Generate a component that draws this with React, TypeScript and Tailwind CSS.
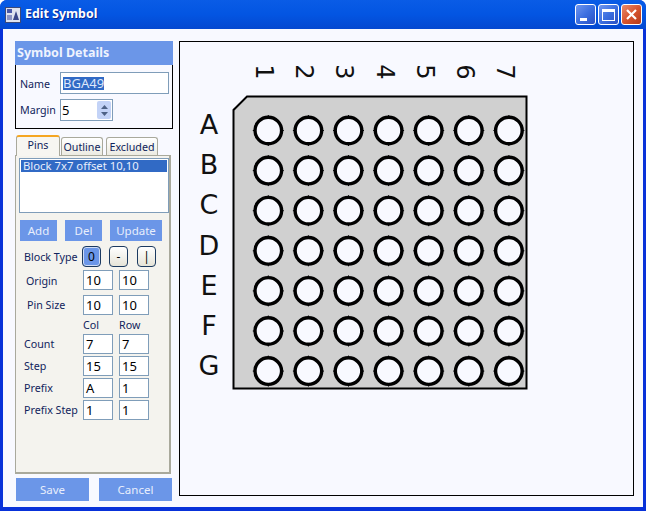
const uiFont = { fontFamily: '"Noto Sans", "Open Sans", sans-serif' };

const rows = ["A", "B", "C", "D", "E", "F", "G"];
const cols = ["1", "2", "3", "4", "5", "6", "7"];

function Field({ value, className = "" }: { value: string; className?: string }) {
  return (
    <div className={`flex h-[20px] w-[30px] items-center border border-[#7f9db9] bg-white pl-[2px] text-[13px] leading-none text-black ${className}`}>
      {value}
    </div>
  );
}

function FieldRow({ label, a, b, indent = "pl-[5px]", className = "" }: { label: string; a: string; b: string; indent?: string; className?: string }) {
  return (
    <div className={`flex h-[20px] items-center ${className}`}>
      <span className={`w-[64px] shrink-0 whitespace-nowrap text-[10.7px] text-[#10245c] ${indent}`}>{label}</span>
      <Field value={a} />
      <Field value={b} className="ml-[6px]" />
    </div>
  );
}

function BlueButton({ label, className }: { label: string; className: string }) {
  return (
    <div className={`flex items-center justify-center bg-[#6b96e8] text-[11.5px] text-[#e8eefc] ${className}`}>
      {label}
    </div>
  );
}

function BlockButton({ label, active = false, className = "" }: { label: string; active?: boolean; className?: string }) {
  return (
    <div className={`flex h-[21px] w-[19px] items-center justify-center rounded-[4px] border border-[#1c3a60] text-[12px] text-black ${active ? "bg-[#6b96e8] shadow-[inset_0_0_0_1px_#cfdcf5]" : "bg-gradient-to-b from-white to-[#e6e4d8]"} ${className}`}>
      {label}
    </div>
  );
}

function Tab({ label, active = false, className = "" }: { label: string; active?: boolean; className?: string }) {
  return (
    <div
      className={
        active
          ? "z-10 -mb-px flex h-[21px] w-[44px] items-center justify-center rounded-t-[3px] border-x border-t-[2px] border-x-[#a9a99c] border-t-[#f5a623] bg-[#f7f6f1] pb-[3px] text-[10.7px] text-[#10245c]"
          : `mt-[2px] flex h-[18px] items-center justify-center rounded-t-[3px] border-x border-t border-[#a9a99c] bg-gradient-to-b from-white to-[#ecebe2] pt-px text-[10.7px] text-[#10245c] ${className}`
      }
    >
      {label}
    </div>
  );
}

function WinButton({ children, red = false }: { children: React.ReactNode; red?: boolean }) {
  return (
    <div className={`flex h-[21px] w-[21px] items-center justify-center rounded-[3px] border border-white ${red ? "bg-gradient-to-br from-[#e88a6a] via-[#d8552f] to-[#b53a1a]" : "bg-gradient-to-br from-[#6f95ee] via-[#3c6fe0] to-[#2a4fc4]"}`}>
      {children}
    </div>
  );
}

// the BGA drawing on the canvas
function Chip() {
  return (
    <svg width="453" height="453" viewBox="180 42 453 453" className="block" style={{ fontFamily: '"DejaVu Sans", sans-serif' }}>
      <path d="M247 96.5H526.5V388.5H233.5V110Z" fill="#d0d0d0" stroke="#000" strokeWidth="2" />
      {cols.map((c, i) => (
        <text key={c} x={0} y={0} fontSize="24" fill="#111" textAnchor="middle" transform={`translate(${256 + i * 40.2} 72) rotate(90)`}>
          {c}
        </text>
      ))}
      {rows.map((r, i) => (
        <text key={r} x={209} y={134 + i * 40.2} fontSize="27" fill="#111" textAnchor="middle">
          {r}
        </text>
      ))}
      {rows.map((r, y) =>
        cols.map((c, x) => {
          const cx = 268.3 + x * 40.1;
          const cy = 130.5 + y * 40.1;
          return (
            <g key={r + c}>
              <circle cx={cx} cy={cy} r="13.3" fill="#f8f9ff" stroke="#000" strokeWidth="3.4" />
              <path d={`M${cx - 15.5} ${cy}h1.5M${cx + 14} ${cy}h1.5M${cx} ${cy - 15.5}v1.5M${cx} ${cy + 14}v1.5`} stroke="#000" strokeWidth="1" />
            </g>
          );
        })
      )}
    </svg>
  );
}

export default function App() {
  return (
    <div className="flex h-[511px] w-[646px] flex-col overflow-hidden rounded-t-[7px] bg-[#0831d9]" style={uiFont}>
      {/* Title bar */}
      <div className="flex h-[29px] shrink-0 items-center bg-gradient-to-b from-[#0a5ce6] via-[#0355e2] to-[#0448d0] pl-[5px] pr-[4px]">
        <div className="flex h-[16px] w-[16px] items-center justify-center border border-[#3d4a7a] bg-[#dfe3f0]">
          <svg width="14" height="14" viewBox="0 0 14 14">
            <rect x="1" y="1" width="5" height="4" fill="#4a58a8" />
            <path d="M7 12L10 3L13 12Z" fill="#3a4688" />
            <rect x="1" y="7" width="5" height="5" fill="#8c94c4" />
          </svg>
        </div>
        <span className="ml-[4px] text-[12.4px] font-bold text-white [text-shadow:1px_1px_0_#0a2a90]">Edit Symbol</span>
        <div className="ml-auto flex gap-[2px]">
          <WinButton>
            <div className="mt-[9px] mr-[5px] h-[3px] w-[7px] bg-white" />
          </WinButton>
          <WinButton>
            <div className="h-[12px] w-[13px] border border-t-[3px] border-white" />
          </WinButton>
          <WinButton red>
            <svg width="13" height="13" viewBox="0 0 13 13">
              <path d="M2 2L11 11M11 2L2 11" stroke="#fff" strokeWidth="2.2" />
            </svg>
          </WinButton>
        </div>
      </div>

      {/* Client area */}
      <div className="mx-[3px] mb-[4px] flex min-h-0 flex-1 bg-[#f8f9ff] pl-[12px] pr-[9px] pt-[12px]">
        {/* Left column */}
        <div className="flex w-[158px] shrink-0 flex-col">
          <div className="h-[88px] border border-black">
            <div className="-m-px flex h-[24px] items-center bg-[#6b96e8] pl-[2px] text-[12.5px] font-bold text-[#eef3fe]">Symbol Details</div>
            <div className="mt-[8px] flex h-[22px] items-center pl-[4px]">
              <span className="w-[40px] pt-[3px] text-[10.7px] text-[#10245c]">Name</span>
              <div className="flex h-[22px] w-[109px] items-center border border-[#7f9db9] bg-white pl-[2px] text-[13px] leading-none">
                <span className="bg-[#316ac5] text-[#dfe8fa]">BGA49</span>
              </div>
            </div>
            <div className="mt-[5px] flex h-[22px] items-center pl-[4px]">
              <span className="w-[40px] text-[10.7px] text-[#10245c]">Margin</span>
              <div className="flex h-[22px] w-[53px] items-center justify-between border border-[#7f9db9] bg-white pl-[1px] pr-px text-[13px] leading-none">
                5
                <div className="flex h-[18px] w-[14px] flex-col items-center justify-center gap-[3px] rounded-[2px] bg-[#c3d3f7]">
                  <svg width="7" height="4" viewBox="0 0 7 4"><path d="M0 4L3.5 0L7 4Z" fill="#4d6185" /></svg>
                  <svg width="7" height="4" viewBox="0 0 7 4"><path d="M0 0L3.5 4L7 0Z" fill="#4d6185" /></svg>
                </div>
              </div>
            </div>
          </div>

          {/* Tabs */}
          <div className="mt-[6px] flex pl-px">
            <Tab label="Pins" active />
            <Tab label="Outline" className="ml-px w-[42px]" />
            <Tab label="Excluded" className="ml-[3px] w-[52px]" />
          </div>
          <div className="flex h-[319px] w-[156px] flex-col border border-b-2 border-r-2 border-[#a9a99c] bg-[#f4f3ee] pl-[3px] pt-[2px]">
            <div className="h-[55px] w-[150px] border border-[#7f9db9] bg-white p-px">
              <div className="flex h-[12px] items-center bg-[#316ac5] pl-[2px] text-[11.3px] text-[#e8eefc]">Block 7x7 offset 10,10</div>
            </div>
            <div className="mt-[7px] flex h-[21px] pl-px">
              <BlueButton label="Add" className="w-[37px]" />
              <BlueButton label="Del" className="ml-[8px] w-[37px]" />
              <BlueButton label="Update" className="ml-[8px] w-[52px]" />
            </div>
            <div className="mt-[5px] flex h-[21px] items-center">
              <span className="w-[63px] shrink-0 whitespace-nowrap pl-[5px] pt-px text-[10.7px] text-[#10245c]">Block Type</span>
              <BlockButton label="0" active />
              <BlockButton label="-" className="ml-[8px]" />
              <BlockButton label="|" className="ml-[9px]" />
            </div>
            <FieldRow label="Origin" a="10" b="10" indent="pl-[7px] pt-[2px]" className="mt-[3px]" />
            <FieldRow label="Pin Size" a="10" b="10" indent="pl-[8px]" className="mt-[5px]" />
            <div className="mt-[3px] flex h-[14px] items-center text-[10.7px] text-[#10245c]">
              <span className="ml-[64px] w-[36px]">Col</span>
              <span>Row</span>
            </div>
            <FieldRow label="Count" a="7" b="7" className="mt-[2px]" />
            <FieldRow label="Step" a="15" b="15" className="mt-[2px]" />
            <FieldRow label="Prefix" a="A" b="1" className="mt-[2px]" />
            <FieldRow label="Prefix Step" a="1" b="1" className="mt-[2px]" />
          </div>

          <div className="mt-[4px] flex pl-px">
            <BlueButton label="Save" className="h-[23px] w-[73px]" />
            <BlueButton label="Cancel" className="ml-[10px] h-[23px] w-[73px]" />
          </div>
        </div>

        {/* Drawing canvas */}
        <div className="ml-[6px] h-[455px] w-[455px] shrink-0 border border-black bg-[#f8f9ff]">
          <Chip />
        </div>
      </div>
    </div>
  );
}
